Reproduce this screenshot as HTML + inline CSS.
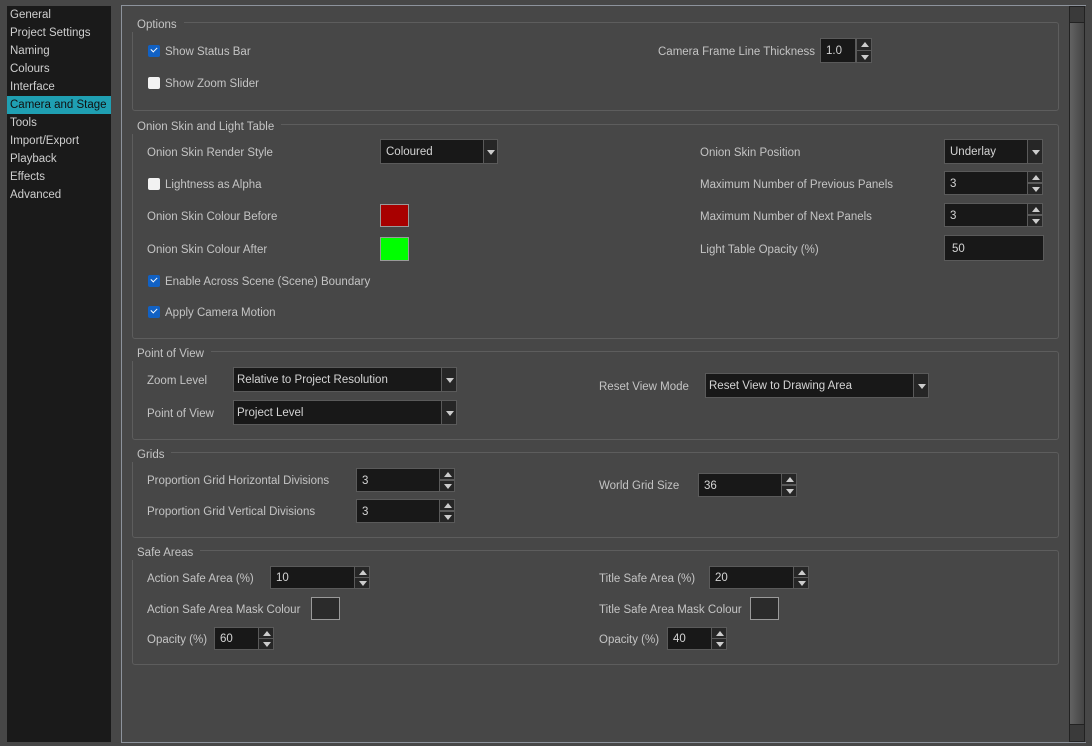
<!DOCTYPE html>
<html><head><meta charset="utf-8"><style>
*{margin:0;padding:0;box-sizing:border-box}
body{width:1092px;height:746px;background:#474747;font-family:"Liberation Sans",sans-serif;font-size:11.5px;color:#c4c4c4;position:relative;overflow:hidden}
.a{position:absolute;line-height:14px;white-space:nowrap;margin-top:1px}
#side{position:absolute;left:7px;top:6px;width:104px;height:736px;background:#1a1a1a}
#side div{height:18px;line-height:19px;padding-left:3px;color:#cfcfcf}
#side .sel{background:#1f9fb2;color:#111}
#frame{position:absolute;left:121px;top:5px;width:965px;height:738px;border:1px solid #8d939c;border-right:none}
#sb{position:absolute;left:1069px;top:6px;width:16px;height:736px;background:linear-gradient(90deg,#626262,#454545);border:1px solid #222}
.g{position:absolute;left:132px;width:927px;border:1px solid #5d5d5d;border-radius:3px}
.gt{position:absolute;left:130px;background:#474747;padding:0 7px 0 7px;line-height:14px;color:#c4c4c4;margin-top:1px}
.in{position:absolute;background:#181818;border:1px solid #5a5a5a;color:#d4d4d4;padding-left:5px;display:flex;align-items:center;padding-top:1px}
.ar{position:absolute;background:#262626;border:1px solid #5a5a5a}
.ar i{position:absolute;left:4px;width:0;height:0;border-left:4px solid transparent;border-right:4px solid transparent}
.cb{position:absolute;width:12px;height:12px;border-radius:2px}
.on{background:#1161c4}
.on::after{content:"";position:absolute;left:3px;top:2px;width:5px;height:3px;border-left:1.5px solid #fff;border-bottom:1.5px solid #fff;transform:rotate(-45deg)}
.off{background:#f2f2f2}
.sw{position:absolute;border:1px solid #9a9a9a}
</style></head><body>
<div id="side">
<div>General</div><div>Project Settings</div><div>Naming</div><div>Colours</div><div>Interface</div><div class="sel">Camera and Stage</div><div>Tools</div><div>Import/Export</div><div>Playback</div><div>Effects</div><div>Advanced</div>
</div>
<div id="frame"></div>
<div id="sb"><div style="position:absolute;left:0;top:0;width:14px;height:16px;background:#3a3a3a;border-bottom:1px solid #222"></div><div style="position:absolute;left:0;bottom:0;width:14px;height:17px;background:#3a3a3a;border-top:1px solid #222"></div></div>

<div class="g" style="top:22px;height:89px"></div><div class="gt" style="top:17px">Options</div>
<div class="cb on" style="left:148px;top:45px"></div><div class="a" style="left:165px;top:44px">Show Status Bar</div>
<div class="cb off" style="left:148px;top:77px"></div><div class="a" style="left:165px;top:76px">Show Zoom Slider</div>
<div class="a" style="left:658px;top:44px">Camera Frame Line Thickness</div>
<div class="in" style="left:820px;top:38px;width:36px;height:25px">1.0</div>
<div class="ar" style="left:856px;top:38px;width:16px;height:13px"><i style="top:3px;border-bottom:5px solid #ccc"></i></div>
<div class="ar" style="left:856px;top:50px;width:16px;height:13px"><i style="top:4px;border-top:5px solid #ccc"></i></div>

<div class="g" style="top:124px;height:215px"></div><div class="gt" style="top:119px">Onion Skin and Light Table</div>
<div class="a" style="left:147px;top:145px">Onion Skin Render Style</div>
<div class="in" style="left:380px;top:139px;width:104px;height:25px">Coloured</div>
<div class="ar" style="left:483px;top:139px;width:15px;height:25px"><i style="left:3px;top:10px;border-top:5px solid #ccc"></i></div>
<div class="cb off" style="left:148px;top:178px"></div><div class="a" style="left:165px;top:177px">Lightness as Alpha</div>
<div class="a" style="left:147px;top:209px">Onion Skin Colour Before</div>
<div class="sw" style="left:380px;top:204px;width:29px;height:23px;background:#a80000"></div>
<div class="a" style="left:147px;top:242px">Onion Skin Colour After</div>
<div class="sw" style="left:380px;top:237px;width:29px;height:24px;background:#00ff00"></div>
<div class="cb on" style="left:148px;top:275px"></div><div class="a" style="left:165px;top:274px">Enable Across Scene (Scene) Boundary</div>
<div class="cb on" style="left:148px;top:306px"></div><div class="a" style="left:165px;top:305px">Apply Camera Motion</div>

<div class="a" style="left:700px;top:145px">Onion Skin Position</div>
<div class="in" style="left:944px;top:139px;width:84px;height:25px">Underlay</div>
<div class="ar" style="left:1027px;top:139px;width:16px;height:25px"><i style="top:10px;border-top:5px solid #ccc"></i></div>
<div class="a" style="left:700px;top:177px">Maximum Number of Previous Panels</div>
<div class="in" style="left:944px;top:171px;width:84px;height:24px">3</div>
<div class="ar" style="left:1027px;top:171px;width:16px;height:12px"><i style="top:3px;border-bottom:5px solid #ccc"></i></div>
<div class="ar" style="left:1027px;top:183px;width:16px;height:12px"><i style="top:3px;border-top:5px solid #ccc"></i></div>
<div class="a" style="left:700px;top:209px">Maximum Number of Next Panels</div>
<div class="in" style="left:944px;top:203px;width:84px;height:24px">3</div>
<div class="ar" style="left:1027px;top:203px;width:16px;height:12px"><i style="top:3px;border-bottom:5px solid #ccc"></i></div>
<div class="ar" style="left:1027px;top:215px;width:16px;height:12px"><i style="top:3px;border-top:5px solid #ccc"></i></div>
<div class="a" style="left:700px;top:242px">Light Table Opacity (%)</div>
<div class="in" style="left:944px;top:235px;width:100px;height:26px;padding-left:7px">50</div>

<div class="g" style="top:351px;height:89px"></div><div class="gt" style="top:346px">Point of View</div>
<div class="a" style="left:147px;top:373px">Zoom Level</div>
<div class="in" style="left:233px;top:367px;width:209px;height:25px;padding-left:3px">Relative to Project Resolution</div>
<div class="ar" style="left:441px;top:367px;width:16px;height:25px"><i style="top:10px;border-top:5px solid #ccc"></i></div>
<div class="a" style="left:147px;top:406px">Point of View</div>
<div class="in" style="left:233px;top:400px;width:209px;height:25px;padding-left:3px">Project Level</div>
<div class="ar" style="left:441px;top:400px;width:16px;height:25px"><i style="top:10px;border-top:5px solid #ccc"></i></div>
<div class="a" style="left:599px;top:379px">Reset View Mode</div>
<div class="in" style="left:705px;top:373px;width:209px;height:25px;padding-left:3px">Reset View to Drawing Area</div>
<div class="ar" style="left:913px;top:373px;width:16px;height:25px"><i style="top:10px;border-top:5px solid #ccc"></i></div>

<div class="g" style="top:452px;height:86px"></div><div class="gt" style="top:447px">Grids</div>
<div class="a" style="left:147px;top:473px">Proportion Grid Horizontal Divisions</div>
<div class="in" style="left:356px;top:468px;width:84px;height:24px">3</div>
<div class="ar" style="left:439px;top:468px;width:16px;height:12px"><i style="top:3px;border-bottom:5px solid #ccc"></i></div>
<div class="ar" style="left:439px;top:480px;width:16px;height:12px"><i style="top:3px;border-top:5px solid #ccc"></i></div>
<div class="a" style="left:147px;top:504px">Proportion Grid Vertical Divisions</div>
<div class="in" style="left:356px;top:499px;width:84px;height:24px">3</div>
<div class="ar" style="left:439px;top:499px;width:16px;height:12px"><i style="top:3px;border-bottom:5px solid #ccc"></i></div>
<div class="ar" style="left:439px;top:511px;width:16px;height:12px"><i style="top:3px;border-top:5px solid #ccc"></i></div>
<div class="a" style="left:599px;top:478px">World Grid Size</div>
<div class="in" style="left:698px;top:473px;width:84px;height:24px">36</div>
<div class="ar" style="left:781px;top:473px;width:16px;height:12px"><i style="top:3px;border-bottom:5px solid #ccc"></i></div>
<div class="ar" style="left:781px;top:485px;width:16px;height:12px"><i style="top:3px;border-top:5px solid #ccc"></i></div>

<div class="g" style="top:550px;height:115px"></div><div class="gt" style="top:545px">Safe Areas</div>
<div class="a" style="left:147px;top:571px">Action Safe Area (%)</div>
<div class="in" style="left:270px;top:566px;width:85px;height:23px">10</div>
<div class="ar" style="left:354px;top:566px;width:16px;height:12px"><i style="top:3px;border-bottom:5px solid #ccc"></i></div>
<div class="ar" style="left:354px;top:577px;width:16px;height:12px"><i style="top:3px;border-top:5px solid #ccc"></i></div>
<div class="a" style="left:147px;top:602px">Action Safe Area Mask Colour</div>
<div class="sw" style="left:311px;top:597px;width:29px;height:23px;background:#2b2b2b"></div>
<div class="a" style="left:147px;top:632px">Opacity (%)</div>
<div class="in" style="left:214px;top:627px;width:45px;height:23px">60</div>
<div class="ar" style="left:258px;top:627px;width:16px;height:12px"><i style="top:3px;border-bottom:5px solid #ccc"></i></div>
<div class="ar" style="left:258px;top:638px;width:16px;height:12px"><i style="top:3px;border-top:5px solid #ccc"></i></div>
<div class="a" style="left:599px;top:571px">Title Safe Area (%)</div>
<div class="in" style="left:709px;top:566px;width:85px;height:23px">20</div>
<div class="ar" style="left:793px;top:566px;width:16px;height:12px"><i style="top:3px;border-bottom:5px solid #ccc"></i></div>
<div class="ar" style="left:793px;top:577px;width:16px;height:12px"><i style="top:3px;border-top:5px solid #ccc"></i></div>
<div class="a" style="left:599px;top:602px">Title Safe Area Mask Colour</div>
<div class="sw" style="left:750px;top:597px;width:29px;height:23px;background:#2b2b2b"></div>
<div class="a" style="left:599px;top:632px">Opacity (%)</div>
<div class="in" style="left:667px;top:627px;width:45px;height:23px">40</div>
<div class="ar" style="left:711px;top:627px;width:16px;height:12px"><i style="top:3px;border-bottom:5px solid #ccc"></i></div>
<div class="ar" style="left:711px;top:638px;width:16px;height:12px"><i style="top:3px;border-top:5px solid #ccc"></i></div>
</body></html>
